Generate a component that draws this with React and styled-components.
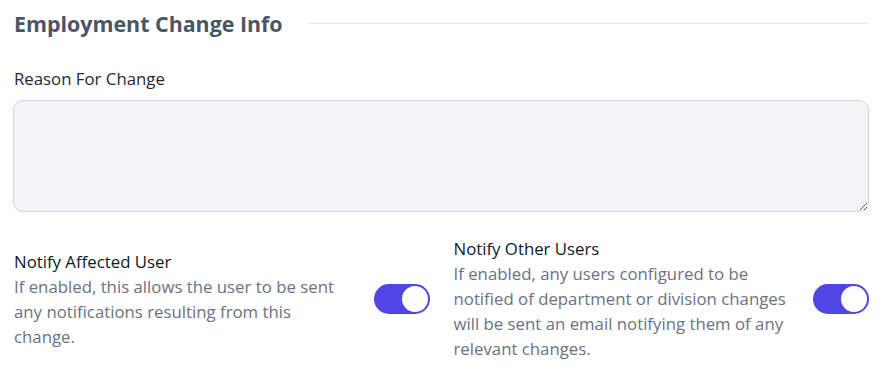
import React from "react";
import styled, { createGlobalStyle } from "styled-components";

const Global = createGlobalStyle`
  html, body { margin: 0; padding: 0; background: #fff; }
  body { font-family: "Open Sans", "Noto Sans", sans-serif; }
  * { box-sizing: border-box; }
`;

const Page = styled.div`
  padding: 7px 12px 0 13px;
  width: 881px;
`;

const HeaderRow = styled.div`
  display: flex;
  align-items: center;
  gap: 25px;
  height: 32px;
`;

const Title = styled.h2`
  margin: 0 0 0 1px;
  font-size: 21.4px;
  font-weight: 700;
  color: #4b5563;
  white-space: nowrap;
`;

const Rule = styled.div`
  flex: 1;
  height: 1px;
  background: #e5e7eb;
`;

const FieldLabel = styled.label`
  display: block;
  margin: 28px 0 0 1px;
  font-size: 16.8px;
  font-weight: 500;
  line-height: 24px;
  color: #1f2937;
`;

const TextArea = styled.textarea`
  display: block;
  width: 100%;
  height: 112px;
  margin-top: 9px;
  background: #f3f4f6;
  border: 1px solid #d1d5db;
  border-radius: 10px;
  font: inherit;
  outline: none;
`;

const Grid = styled.div`
  display: grid;
  grid-template-columns: 1fr 1fr;
  column-gap: 24px;
  margin-top: 24px;
  padding-left: 1px;
`;

const Option = styled.div`
  display: flex;
  align-items: center;
  gap: 24px;
`;

const OptionText = styled.div`
  flex: 1;
`;

const OptionTitle = styled.div`
  font-size: 16.8px;
  font-weight: 500;
  line-height: 25px;
  color: #111827;
`;

const OptionDesc = styled.div`
  font-size: 16.8px;
  line-height: 25px;
  color: #6b7280;
`;

const Toggle = styled.div`
  flex: none;
  width: 56px;
  height: 30px;
  border-radius: 15px;
  background: ${(p) => (p.$on ? "#4f46e5" : "#e5e7eb")};
  padding: 2px;
  display: flex;
  justify-content: ${(p) => (p.$on ? "flex-end" : "flex-start")};
`;

const Knob = styled.div`
  width: 26px;
  height: 26px;
  border-radius: 50%;
  background: #fff;
`;

export default function App() {
  return (
    <Page>
      <Global />
      <HeaderRow>
        <Title>Employment Change Info</Title>
        <Rule />
      </HeaderRow>
      <FieldLabel>Reason For Change</FieldLabel>
      <TextArea />
      <Grid>
        <Option>
          <OptionText>
            <OptionTitle>Notify Affected User</OptionTitle>
            <OptionDesc>
              If enabled, this allows the user to be sent any notifications resulting from this change.
            </OptionDesc>
          </OptionText>
          <Toggle $on><Knob /></Toggle>
        </Option>
        <Option>
          <OptionText>
            <OptionTitle>Notify Other Users</OptionTitle>
            <OptionDesc>
              If enabled, any users configured to be notified of department or division changes will be sent an email notifying them of any relevant changes.
            </OptionDesc>
          </OptionText>
          <Toggle $on><Knob /></Toggle>
        </Option>
      </Grid>
    </Page>
  );
}
